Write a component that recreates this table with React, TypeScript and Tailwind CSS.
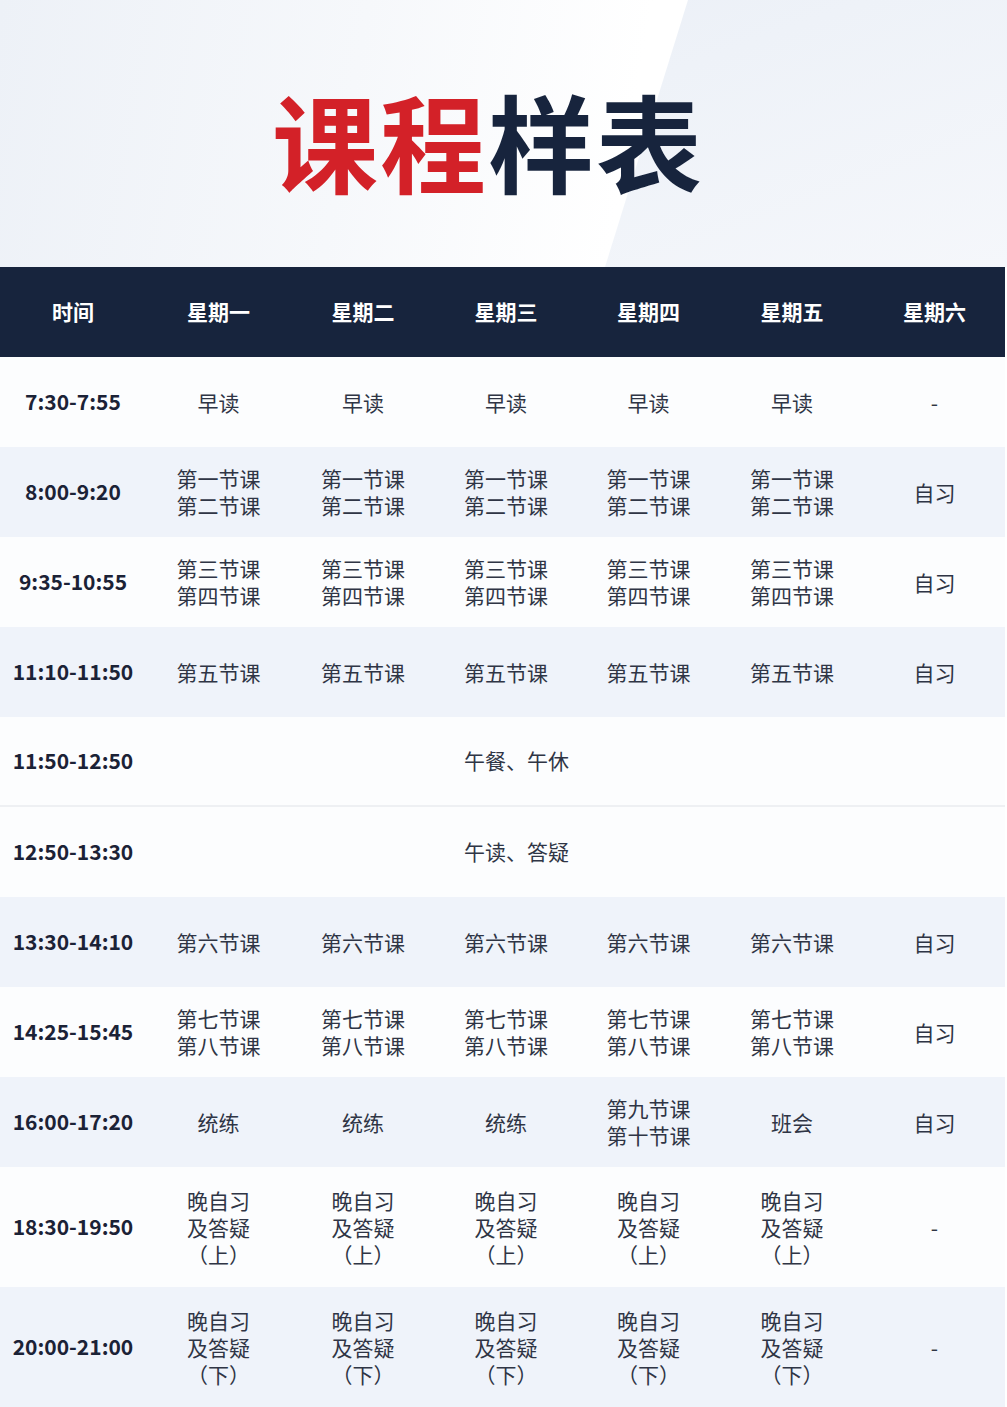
const font = { fontFamily: '"Noto Sans CJK SC", "Noto Sans", sans-serif' };

type Row = {
  time: string;
  cells?: string[];
  span?: string;
  tint: boolean;
  tall?: boolean;
  rule?: boolean;
};

const rep = (s: string, last: string) => [s, s, s, s, s, last];

const rows: Row[] = [
  { time: "7:30-7:55", cells: rep("早读", "-"), tint: false },
  { time: "8:00-9:20", cells: rep("第一节课\n第二节课", "自习"), tint: true },
  { time: "9:35-10:55", cells: rep("第三节课\n第四节课", "自习"), tint: false },
  { time: "11:10-11:50", cells: rep("第五节课", "自习"), tint: true },
  { time: "11:50-12:50", span: "午餐、午休", tint: false, rule: true },
  { time: "12:50-13:30", span: "午读、答疑", tint: false },
  { time: "13:30-14:10", cells: rep("第六节课", "自习"), tint: true },
  { time: "14:25-15:45", cells: rep("第七节课\n第八节课", "自习"), tint: false },
  {
    time: "16:00-17:20",
    cells: ["统练", "统练", "统练", "第九节课\n第十节课", "班会", "自习"],
    tint: true,
  },
  { time: "18:30-19:50", cells: rep("晚自习\n及答疑\n（上）", "-"), tint: false, tall: true },
  { time: "20:00-21:00", cells: rep("晚自习\n及答疑\n（下）", "-"), tint: true, tall: true },
];

const days = ["星期一", "星期二", "星期三", "星期四", "星期五", "星期六"];

const grid = "grid grid-cols-[146px_145px_144px_142px_143px_144px_141px]";

const Cell = ({ text }: { text: string }) => (
  <div className="flex flex-col items-center justify-center text-center text-[21px] leading-[27px] text-[#2f3545]">
    {text.split("\n").map((line, i) => (
      <span key={i} className="block h-[27px]">
        {line}
      </span>
    ))}
  </div>
);

export default function App() {
  return (
    <div className="w-[1007px] bg-white" style={font}>
      {/* title band */}
      <header className="relative h-[267px] overflow-hidden bg-[linear-gradient(100deg,#edf1f7_0%,#f6f8fb_35%,#ffffff_62%)]">
        <div className="absolute inset-0 bg-[linear-gradient(160deg,#e7ecf5_0%,#eef2f8_50%,#f5f7fb_100%)] [clip-path:polygon(688px_0,100%_0,100%_100%,605px_100%)]"></div>
        <h1 className="relative flex justify-center pt-[86px] pr-[31px] text-[106px] font-bold leading-none tracking-[2px]">
          <span className="text-[#d32128]">课程</span>
          <span className="text-[#17243d]">样表</span>
        </h1>
      </header>

      <div className="w-[1005px]">
        <div className={`${grid} h-[90px] bg-[#17243d] text-[21px] font-bold text-white`}>
          <div className="flex items-center justify-center">时间</div>
          {days.map((d) => (
            <div key={d} className="flex items-center justify-center">
              {d}
            </div>
          ))}
        </div>

        {rows.map((r) => (
          <div
            key={r.time}
            className={`${grid} ${r.tall ? "h-[120px]" : "h-[90px]"} ${
              r.tint ? "bg-[#eff3fa]" : "bg-[#fcfdfe]"
            } ${r.rule ? "border-b-2 border-[#eef0f3]" : ""}`}
          >
            <div className="flex items-center justify-center text-[21px] font-bold text-[#1b2236]">
              {r.time}
            </div>
            {r.span ? (
              <div className="col-span-6 flex items-center justify-center pr-[118px] text-[21px] text-[#2f3545]">
                {r.span}
              </div>
            ) : (
              r.cells!.map((c, i) => <Cell key={i} text={c} />)
            )}
          </div>
        ))}
      </div>
    </div>
  );
}
